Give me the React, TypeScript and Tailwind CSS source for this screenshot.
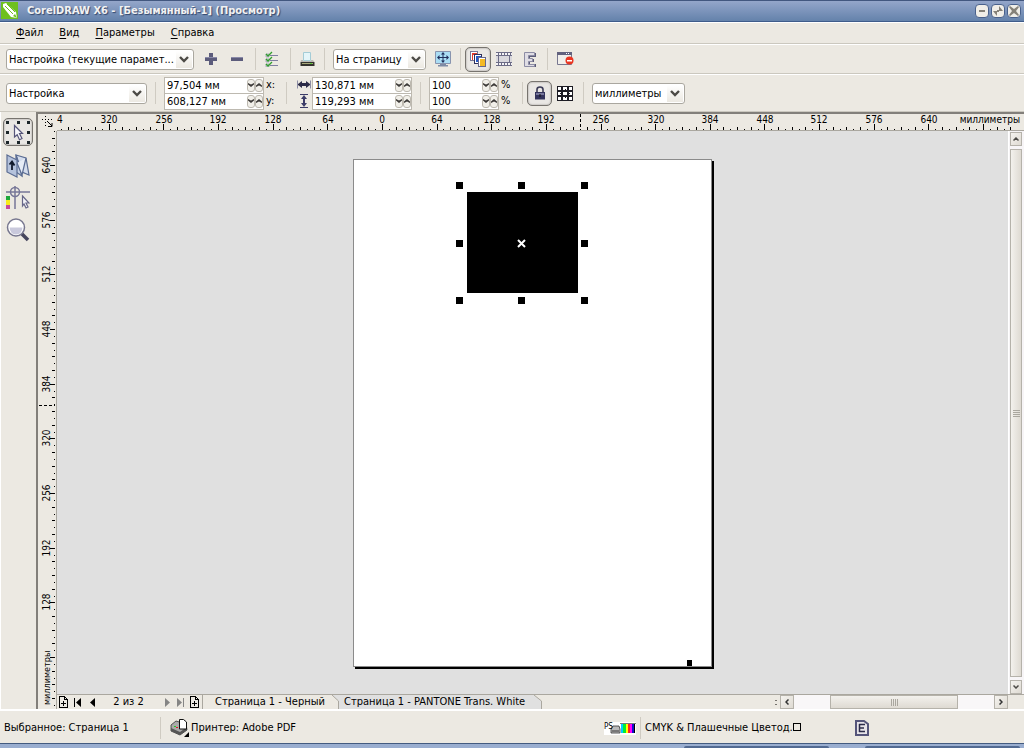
import type { ReactNode } from 'react';

const PITCH = 54.65;

const Sep = ({ className = '' }: { className?: string }) => (
  <span className={`w-px h-[22px] shrink-0 bg-[#cfcbc2] ${className}`} />
);

const Chevron = () => (
  <svg className="w-[10px] h-[7px]" viewBox="0 0 10 7" fill="none" stroke="#4c4a46" strokeWidth="2.4">
    <path d="M1 1l4 4 4-4" />
  </svg>
);

const Dropdown = ({ label, value, className }: { label: string; value: string; className: string }) => (
  <span className={`grid shrink-0 h-[21px] rounded-[3px] border border-[#aaa79f] bg-white ${className}`}>
    <select aria-label={label} className="[grid-area:1/1] appearance-none w-full h-[19px] pl-[2px] pr-4 bg-transparent text-[11px] leading-[19px] truncate outline-none">
      <option>{value}</option>
    </select>
    <span className="[grid-area:1/1] justify-self-end flex items-center justify-center w-4 h-[17px] m-px bg-linear-to-b from-white to-[#ece9e2] pointer-events-none">
      <Chevron />
    </span>
  </span>
);

const SPIN_BTN = 'flex items-center justify-center w-[8px] h-[13px] rounded-[3px] border border-[#bdb9b0] bg-[#f1efe9]';

const Spin = ({ label, value, className }: { label: string; value: string; className: string }) => (
  <span className={`flex items-center h-[17px] border border-[#bdb9b0] bg-white ${className}`}>
    <input aria-label={label} defaultValue={value} className="flex-1 min-w-0 h-[15px] pl-[2px] text-[11px] leading-[15px] outline-none" />
    <button aria-label={`${label} -`} className={SPIN_BTN}>
      <svg className="w-[6px] h-[4px] shrink-0" viewBox="0 0 6 4"><path d="M0 0l3 1.500L6 0v1.500L3 4 0 1.500z" fill="#3c3a38" /></svg>
    </button>
    <button aria-label={`${label} +`} className={SPIN_BTN}>
      <svg className="w-[6px] h-[4px] shrink-0" viewBox="0 0 6 4"><path d="M0 4l3-1.500L6 4V2.500L3 0 0 2.500z" fill="#3c3a38" /></svg>
    </button>
  </span>
);

const IconButton = ({ label, className, children }: { label: string; className: string; children: ReactNode }) => (
  <button aria-label={label} className={`flex items-center justify-center shrink-0 ${className}`}>
    {children}
  </button>
);

const PRESSED = 'rounded-[5px] border border-[#77746f] bg-[#e9e7e4] shadow-[inset_0_0_2px_#8d8a86]';

const TitleBar = () => (
  <header className="flex items-center h-[22px] shrink-0 pr-[3px] pb-px border-t border-b border-t-[#42577f] border-b-[#3f5c8a] bg-linear-to-b from-[#94a6ca] to-[#6482ab]">
    <svg className="w-[17px] h-[17px] ml-px" viewBox="0 0 17 17">
      <path d="M0 0h17v17H0z" fill="#6ec01e" />
      <path d="M2 2l3-1 10 9 1 6-6-1L2 5z" fill="#fff" />
      <path d="M4 4l8 8M6 2l8 8" stroke="#6ec01e" strokeWidth="1" />
      <path d="M12 14l2-2 2 4z" fill="#6ec01e" />
    </svg>
    <h1 className="ml-[9px] text-[11px] leading-4 font-bold text-[#f2f2f2] [text-shadow:1px_1px_1px_#33476c] whitespace-nowrap">
      CorelDRAW X6 - [Безымянный-1] (Просмотр)
    </h1>
    <div className="flex gap-[2px] ml-auto">
      {[
        ['Свернуть', 'M4 6h6v2H4z'],
        ['Восстановить', 'M8 2l4 5H8zM6 12L2 7h4zM6 6h2v2H6z'],
        ['Закрыть', 'M3 2l4 3 4-3 1 1-3 4 3 4-1 1-4-3-4 3-1-1 3-4-3-4z'],
      ].map(([name, d]) => (
        <button key={name} aria-label={name} className="flex items-center justify-center w-[14px] h-[14px] rounded-[4px] border border-[#49618c] bg-[#f0eee8]">
          <svg className="w-[14px] h-[14px] shrink-0" viewBox="0 0 14 14"><path d={d} fill="#858178" /></svg>
        </button>
      ))}
    </div>
  </header>
);

const MenuBar = () => (
  <nav className="flex items-center gap-4 h-[22px] shrink-0 pl-4 border-t border-t-white border-b border-b-[#cbc8bf]">
    {['Файл', 'Вид', 'Параметры', 'Справка'].map((item) => (
      <a key={item} href="#" className="leading-4">
        <span className="underline underline-offset-2">{item[0]}</span>{item.slice(1)}
      </a>
    ))}
  </nav>
);

const StandardBar = () => (
  <div className="flex items-center h-[30px] shrink-0 pl-[6px] border-t border-t-white border-b border-b-[#cbc8bf]">
    <Dropdown label="Стиль просмотра" value="Настройка (текущие парамет..." className="w-[188px]" />
    <IconButton label="Добавить" className="ml-[10px] w-[14px] h-[14px]">
      <svg className="w-[14px] h-[14px]" viewBox="0 0 14 14"><path d="M5 1h4v4h4v4H9v4H5V9H1V5h4z" fill="#5c5c7c" /><path d="M1 5h12v1H1z" fill="#8a8aa8" /></svg>
    </IconButton>
    <IconButton label="Удалить" className="ml-3 w-[14px] h-[14px]">
      <svg className="w-[14px] h-[14px]" viewBox="0 0 14 14"><path d="M1 5h12v4H1z" fill="#5c5c7c" /><path d="M1 5h12v1H1z" fill="#8a8aa8" /></svg>
    </IconButton>
    <Sep className="ml-[11px]" />
    <IconButton label="Параметры" className="ml-[9px] w-[14px] h-[16px]">
      <svg className="w-[14px] h-[16px]" viewBox="0 0 14 16" fill="none">
        <path d="M5 4.500h8M5 9.500h8M5 14.500h8" stroke="#8080a0" />
        <path d="M1 3h3v3H1zM1 8h3v3H1zM1 13h3v3H1z" fill="#d8d6e0" stroke="#8c8caa" strokeWidth=".6" />
        <path d="M1 3l2 2 4-4M1 8l2 2 4-4M1 13l2 2 4-4" stroke="#32a02c" strokeWidth="1.300" />
      </svg>
    </IconButton>
    <Sep className="ml-[11px]" />
    <IconButton label="Печать" className="ml-[9px] w-[15px] h-[15px]">
      <svg className="w-[15px] h-[15px]" viewBox="0 0 15 15">
        <path d="M3.500.5h7v8h-7z" fill="#e4f5f9" stroke="#a4ccd6" />
        <path d="M1 8h2v1h8V8h2l1.500 2H.5z" fill="#bcbab4" />
        <path d="M.5 10h14v4H.5z" fill="#34342e" /><path d="M2 11h11v1H2z" fill="#a7a87a" /><path d="M10 11h2v1h-2z" fill="#5cd03c" />
      </svg>
    </IconButton>
    <Sep className="ml-[9px]" />
    <Dropdown label="Масштаб" value="На страницу" className="ml-2 w-[93px]" />
    <IconButton label="Во весь экран" className="ml-[9px] w-4 h-4">
      <svg className="w-4 h-4" viewBox="0 0 16 16">
        <path d="M.5.5h15v12H.5z" fill="#aaddf4" stroke="#8894ae" />
        <path d="M5 13h6v1h2v1.500H3V14h2z" fill="#7d8aa4" />
        <path d="M3 6.500h10M8 2v9" stroke="#20305c" />
        <path d="M2 6.500L4.500 4v5zM14 6.500L11.500 4v5zM8 1L6 3.500h4zM8 12L6 9.500h4z" fill="#20305c" />
      </svg>
    </IconButton>
    <Sep className="ml-[9px]" />
    <IconButton label="Композит" className={`ml-[4px] w-[26px] h-[25px] ${PRESSED}`}>
      <svg className="w-[18px] h-[18px] shrink-0" viewBox="0 0 18 18" fill="#fff" shapeRendering="crispEdges">
        <path d="M1.500 1.500h7v9h-7z" stroke="#777798" /><path d="M3 3h5v2H4v5H3z" fill="#e23a2c" />
        <path d="M5.500 4.500h7v9h-7z" stroke="#30305c" /><path d="M7 6h5v2H9v4H7z" fill="#2458c8" />
        <path d="M9.500 7.500h7v9h-7z" stroke="#67678a" /><path d="M11 9h5v7h-5z" fill="#f4b924" />
      </svg>
    </IconButton>
    <IconButton label="Цветоделение" className="ml-[5px] w-4 h-4">
      <svg className="w-4 h-4" viewBox="0 0 16 16" shapeRendering="crispEdges">
        <path d="M0 1h16v4H0zM0 11h16v4H0z" fill="#6c6c86" />
        <path d="M3 5h10v6H3z" fill="#d9d8dd" /><path d="M2 4h1v8H2zM13 4h1v8h-1z" fill="#6c6c86" />
        <path d="M0 5h2v6H0zM14 5h2v6h-2z" fill="#d9d8dd" />
        <path d="M0 3h16M0 13h16" stroke="#f4f3f6" strokeWidth="2" strokeDasharray="2 1" />
      </svg>
    </IconButton>
    <IconButton label="Эмуляция" className="ml-[11px] w-[14px] h-[17px]">
      <svg className="w-[14px] h-[17px]" viewBox="0 0 14 17">
        <path d="M2 2h11v4H7v2h4v3H7v2h6v3H2z" fill="#5c5c78" />
        <path d="M1.500 1.500h10v3h-6v3h4v3h-4v3h6v2h-10z" fill="#dfdde4" stroke="#8c8ca4" />
      </svg>
    </IconButton>
    <Sep className="ml-[10px]" />
    <IconButton label="Закрыть просмотр" className="ml-[9px] w-[17px] h-4">
      <svg className="w-[17px] h-4" viewBox="0 0 17 16">
        <path d="M.5 1.500h14v12H.5z" fill="#f1efeb" stroke="#777790" /><path d="M0 1h15v3H0z" fill="#62627e" /><path d="M9 2h1v1H9zM11 2h1v1h-1z" fill="#fff" />
        <circle cx="12.500" cy="9.500" r="4" fill="#e93622" /><path d="M10 9h5v1.500h-5z" fill="#fff" />
      </svg>
    </IconButton>
  </div>
);

const PropertyBar = () => (
  <div className="flex items-center h-[37px] shrink-0 pl-[6px] border-t border-t-white">
    <Dropdown label="Расположение" value="Настройка" className="w-[141px]" />
    <Sep className="ml-2" />
    <div className="flex flex-col -space-y-px ml-2">
      <Spin label="x" value="97,504 мм" className="w-[100px]" />
      <Spin label="y" value="608,127 мм" className="w-[100px]" />
    </div>
    <div className="flex flex-col ml-[2px] w-3 leading-4">
      <span>x:</span>
      <span>y:</span>
    </div>
    <Sep className="ml-2" />
    <div className="flex flex-col items-center gap-[2px] ml-[10px] w-[14px]">
      <svg className="w-[14px] h-[14px]" viewBox="0 0 14 14"><path d="M.5 2.500v8M13.500 2.500v8" stroke="#8c8ca4" fill="none" /><path d="M1 6l4-3v2h4V3l4 3v1l-4 3V8H5v2L1 7z" fill="#2c2c48" /></svg>
      <svg className="w-[14px] h-[14px]" viewBox="0 0 14 14"><path d="M3 .5h8M3 13.500h8" stroke="#3c3c68" fill="none" /><path d="M7 1l3 4H8v4h2l-3 4-3-4h2V5H4z" fill="#3c3c68" /></svg>
    </div>
    <div className="flex flex-col -space-y-px ml-px">
      <Spin label="Ширина" value="130,871 мм" className="w-[100px]" />
      <Spin label="Высота" value="119,293 мм" className="w-[100px]" />
    </div>
    <Sep className="ml-2" />
    <div className="flex flex-col -space-y-px ml-2">
      <Spin label="Масштаб по ширине" value="100" className="w-[70px]" />
      <Spin label="Масштаб по высоте" value="100" className="w-[70px]" />
    </div>
    <div className="flex flex-col ml-[2px] w-3 leading-4">
      <span>%</span>
      <span>%</span>
    </div>
    <Sep className="ml-[9px]" />
    <IconButton label="Сохранять пропорции" className={`ml-[4px] w-[25px] h-[25px] ${PRESSED}`}>
      <svg className="w-[12px] h-[14px]" viewBox="0 0 12 14"><path d="M3 7V3.500Q3 1 6 1t3 2.500V7" fill="none" stroke="#3c3c58" strokeWidth="1.600" /><path d="M1 6h10v7.500H1z" fill="#33335c" /><path d="M2 7h8v2H2z" fill="#77779c" /><path d="M5.500 8h1v3h-1z" fill="#111" /></svg>
    </IconButton>
    <IconButton label="Мозаика" className="ml-[5px] w-[17px] h-[17px]">
      <svg className="w-[17px] h-[17px]" viewBox="0 0 17 17" fill="#fff" stroke="#1c1c24" shapeRendering="crispEdges">
        <path d="M.5 1.500h4v4h-4zM5.500 1.500h5v4h-5zM11.500 1.500h4v4h-4zM.5 6.500h4v4h-4zM11.500 6.500h4v4h-4zM.5 11.500h4v4h-4zM5.500 11.500h5v4h-5zM11.500 11.500h4v4h-4z" />
        <path d="M5.500 6.500h5v4h-5z" />
        <path d="M3 8.500h3M10 8.500h3M8 4v3M8 10v3" />
      </svg>
    </IconButton>
    <Sep className="ml-[9px]" />
    <Dropdown label="Единицы" value="миллиметры" className="ml-2 w-[93px]" />
  </div>
);

const ToolBox = () => (
  <aside className="flex flex-col items-center gap-2 w-9 shrink-0 pt-[6px] pr-[2px] border-l border-l-white">
    <IconButton label="Указатель" className={`w-[30px] h-[28px] ${PRESSED}`}>
      <svg className="w-[26px] h-[26px] shrink-0" viewBox="0 0 26 26">
        <path d="M1 2h3v3H1zM12 2h3v3h-3zM22 2h3v3h-3zM1 12h3v3H1zM22 12h3v3h-3zM1 22h3v3H1zM12 22h3v3h-3zM22 22h3v3h-3z" fill="#1d272b" />
        <path d="M9.500 6.500l8 8h-3l2.500 5-2.500 1.200-2.300-5-2.700 2.300z" fill="#f7f7fb" stroke="#55557a" strokeWidth="1.200" />
      </svg>
    </IconButton>
    <IconButton label="Спуск полос" className="w-6 h-6">
      <svg className="w-6 h-6" viewBox="0 0 24 24" stroke="#5a6c92" strokeWidth="1.200">
        <path d="M10 1l10 3 3 17-7-3z" fill="#d3dcec" />
        <path d="M10 1v17l6 4z" fill="#c4d0e4" />
        <path d="M20 4l-4 17-5-12" fill="#e6ecf6" />
        <path d="M1 1l10 5v17L1 18z" fill="#b4c2dc" />
        <path d="M6 16V8M3.500 10.500L6 7.500l2.500 4" fill="none" stroke="#111a2c" strokeWidth="1.800" />
      </svg>
    </IconButton>
    <IconButton label="Метки печати" className="w-6 h-6">
      <svg className="w-6 h-6" viewBox="0 0 24 24" fill="none" stroke="#777798" strokeWidth="1.500">
        <path d="M0 6h24M9 0v23" /><circle cx="9" cy="6" r="4.500" />
        <path d="M0 10h4v4H0z" fill="#1fa83a" stroke="none" /><path d="M0 14h4v5H0z" fill="#f6ec18" stroke="none" /><path d="M0 19h4v4H0z" fill="#c8489c" stroke="none" />
        <path d="M16.500 10l6.500 7h-3l2 4-2 1-2-4-1.500 2z" fill="#f3f3f8" stroke="#666688" strokeWidth="1.200" />
      </svg>
    </IconButton>
    <IconButton label="Масштаб" className="w-6 h-6">
      <svg className="w-6 h-6" viewBox="0 0 24 24">
        <path d="M15 15l7 7" stroke="#45455c" strokeWidth="3.500" />
        <circle cx="10" cy="9.500" r="8.500" fill="#fff" stroke="#77778f" strokeWidth="1.500" />
        <path d="M3.500 9.500h13Q16 16 10 16.500 4 16 3.500 9.500z" fill="#c9c9dc" />
      </svg>
    </IconButton>
  </aside>
);

const H_LABELS = ['320', '256', '192', '128', '64', '0', '64', '128', '192', '256', '320', '384', '448', '512', '576', '640'];
const V_LABELS = ['640', '576', '512', '448', '384', '320', '256', '192', '128'];

const tickLength = (n: number, major: number) => {
  if (n % 8 === 0) return major;
  return n % 2 === 0 ? 3 : 1;
};

const HorizontalRuler = () => (
  <div className="flex flex-1 min-w-0 h-[17px] border-b border-b-[#aaa79f]">
    <svg className="flex-1 min-w-0 h-[17px]" shapeRendering="crispEdges" fontSize="10">
      {Array.from({ length: 141 }, (_, n) => {
        const len = tickLength(n, 6);
        return <rect key={n} x={Math.round(-3 + (n * PITCH) / 8)} y={16 - len} width="1" height={len} />;
      })}
      <text x="0" y="9">4</text>
      {H_LABELS.map((label, i) => (
        <text key={i} x={Math.round(52 + i * PITCH)} y="9" textAnchor="middle">{label}</text>
      ))}
      <path d="M523.500 0v16" stroke="#000" strokeDasharray="3 2" />
    </svg>
    <span className="-ml-[66px] w-[66px] pr-1 text-[10px] leading-[12px] text-right">миллиметры</span>
  </div>
);

const VerticalRuler = () => (
  <svg className="w-[19px] h-full shrink-0 border-r border-r-[#aaa79f]" shapeRendering="crispEdges" fontSize="10">
    {Array.from({ length: 85 }, (_, n) => {
      const len = tickLength(n + 3, 5);
      return <rect key={n} x={17 - len} y={Math.round((n * PITCH) / 8)} width={len} height="1" />;
    })}
    {V_LABELS.map((label, i) => (
      <text key={i} transform={`translate(12 ${Math.round(34 + i * PITCH)}) rotate(-90)`} textAnchor="middle">{label}</text>
    ))}
    <text transform="translate(12 574) rotate(-90)" fontSize="9">миллиметры</text>
    <path d="M1 274.500h16" stroke="#000" strokeDasharray="3 2" />
  </svg>
);

const Canvas = () => (
  <main className="relative flex-1 min-w-0 overflow-hidden bg-[#e0e0e0]">
    <div className="absolute left-[296px] top-[28px] w-[359px] h-[508px] border border-[#8b8b8b] bg-white shadow-[2px_2px_0_#000]">
      <svg className="w-full h-full" shapeRendering="crispEdges">
        <path d="M113 32h111v101H113z" />
        <path d="M102 22h7v7h-7zM164 22h7v7h-7zM227 22h7v7h-7zM102 80h7v7h-7zM227 80h7v7h-7zM102 137h7v7h-7zM164 137h7v7h-7zM227 137h7v7h-7z" />
        <path d="M164 80l7 7M171 80l-7 7" stroke="#fff" strokeWidth="2" shapeRendering="auto" />
        <path d="M333 500h5v6h-5z" />
      </svg>
    </div>
  </main>
);

const SCROLL_BTN = 'flex items-center justify-center shrink-0 border border-[#b5b2aa] bg-linear-to-br from-[#f5f3ef] to-[#dedad2]';

const VerticalScroll = () => (
  <div className="flex flex-col w-[16px] shrink-0 pl-px pr-[2px] pt-px border-l border-l-white bg-[#f7f5f7]">
    <button aria-label="Вверх" className={`h-[14px] ${SCROLL_BTN}`}>
      <svg className="w-[6px] h-[4px]" viewBox="0 0 6 4" fill="none" stroke="#4c4a46" strokeWidth="1.500"><path d="M.5 3.500L3 1l2.500 2.500" /></svg>
    </button>
    <div className="flex flex-col items-center justify-center gap-px flex-1 my-[3px] border border-[#b5b2aa] bg-linear-to-r from-[#f3f1ed] to-[#dedad2]">
      {[0, 1, 2, 3].map((n) => <span key={n} className="w-[7px] h-px bg-[#aaa79f]" />)}
    </div>
    <button aria-label="Вниз" className={`h-[14px] ${SCROLL_BTN}`}>
      <svg className="w-[6px] h-[4px]" viewBox="0 0 6 4" fill="none" stroke="#4c4a46" strokeWidth="1.500"><path d="M.5.5L3 3 5.500.5" /></svg>
    </button>
  </div>
);

const AddPage = () => (
  <svg className="w-[10px] h-[12px]" viewBox="0 0 10 12" fill="none" stroke="#000" shapeRendering="crispEdges">
    <path d="M.5.5h5l3 3v8h-8zM5.500.5v3h3M2 7.500h5M4.500 5v5" />
  </svg>
);

const PageBar = () => (
  <div className="flex items-stretch h-[15px] shrink-0 border-t border-t-[#aaa79f]">
    <IconButton label="Добавить страницу" className="ml-[2px] w-[10px]"><AddPage /></IconButton>
    <IconButton label="Первая" className="ml-[5px] w-[8px]"><svg className="w-[8px] h-[10px]" viewBox="0 0 8 10"><path d="M0 1h1v9H0zM7 1v9L2 5.500z" /></svg></IconButton>
    <IconButton label="Предыдущая" className="ml-2 w-[6px]"><svg className="w-[6px] h-[10px]" viewBox="0 0 6 10"><path d="M5 1v9L0 5.500z" /></svg></IconButton>
    <span className="w-[69px] pr-[4px] text-center leading-[14px]">2 из 2</span>
    <IconButton label="Следующая" className="w-[6px]"><svg className="w-[6px] h-[10px]" viewBox="0 0 6 10" fill="#858585"><path d="M0 1v9l5-4.500z" /></svg></IconButton>
    <IconButton label="Последняя" className="ml-[6px] w-[7px]"><svg className="w-[7px] h-[10px]" viewBox="0 0 7 10" fill="#858585"><path d="M0 1v9l5-4.500zM6 1h1v9H6z" /></svg></IconButton>
    <IconButton label="Добавить страницу после" className="ml-[6px] w-[10px]"><AddPage /></IconButton>
    <span className="ml-[2px] w-px bg-[#aaa79f]" />
    <button className="w-[129px] pl-[12px] text-left leading-[14px] whitespace-nowrap">Страница 1 - Черный</button>
    <svg className="w-[7px] h-[14px] bg-[#e0e0e0]" viewBox="0 0 7 14"><path d="M0 0l6.500 6v8H0z" fill="#ece9e2" /><path d="M0 0l6.500 6v8" fill="none" stroke="#aaa79f" /></svg>
    <button className="w-[195px] pl-[5px] text-left leading-[14px] whitespace-nowrap bg-[#e0e0e0]">Страница 1 - PANTONE Trans. White</button>
    <svg className="w-[8px] h-[14px]" viewBox="0 0 8 14"><path d="M0 0l7.500 6v8H0z" fill="#e0e0e0" /><path d="M0 0l7.500 6v8" fill="none" stroke="#aaa79f" /></svg>
    <div className="flex ml-auto w-[233px] mr-4">
      <span className="flex flex-col justify-center gap-[3px] w-[5px]"><i className="w-[2px] h-px bg-[#77746f]" /><i className="w-[2px] h-px bg-[#77746f]" /></span>
      <button aria-label="Влево" className={`w-[14px] ${SCROLL_BTN}`}>
        <svg className="w-[4px] h-[6px]" viewBox="0 0 4 6" fill="none" stroke="#333" strokeWidth="1.500"><path d="M3.500.5L1 3l2.500 2.500" /></svg>
      </button>
      <span className="w-9 bg-[#f9f7f8]" />
      <span className="flex items-center justify-center gap-px w-[128px] border border-[#b5b2aa] bg-linear-to-b from-[#f3f1ed] to-[#dedad2]">
        {[0, 1, 2, 3].map((n) => <span key={n} className="w-px h-[7px] bg-[#aaa79f]" />)}
      </span>
      <span className="flex-1 bg-[#f9f7f8]" />
      <button aria-label="Вправо" className={`w-[14px] ${SCROLL_BTN}`}>
        <svg className="w-[4px] h-[6px]" viewBox="0 0 4 6" fill="none" stroke="#333" strokeWidth="1.500"><path d="M.5.5L3 3 .5 5.500" /></svg>
      </button>
    </div>
  </div>
);

const StatusBar = () => (
  <footer className="flex items-center h-[34px] shrink-0 pl-1 pt-[2px] border-t-2 border-t-white">
    <span className="w-[156px]">Выбранное: Страница 1</span>
    <Sep />
    <svg className="w-[19px] h-[18px] ml-[9px]" viewBox="0 0 19 18">
      <path d="M1 6l5-4 10 3 1 6-7 5-9-4z" fill="#aaa" stroke="#333" strokeWidth=".8" /><path d="M1 9l9 4 7-5v3l-7 5-9-4z" fill="#555" />
      <path d="M9.500.5h4l3 2.500v7h-7z" fill="#fff" stroke="#111" /><path d="M4 7h2v1H4z" fill="#2c2" /><path d="M6 8h2v1H6z" fill="#d22" />
      <path d="M19 13v5h-5z" />
    </svg>
    <span className="ml-[2px] w-[413px]">Принтер: Adobe PDF</span>
    <svg className="w-[32px] h-[13px]" viewBox="0 0 32 13">
      <path d="M0 0h32v13H0z" fill="#fff" />
      <path d="M7 7l2-3h6l1 3v4H7z" fill="#bbb" stroke="#333" strokeWidth=".8" /><path d="M8 9h7" stroke="#333" />
      <text x="0" y="7" fontSize="8">PS</text>
      <path d="M16 1h16v1H16z" fill="#777" />
      <path d="M17 2h2v9h-2z" fill="#0cf" /><path d="M19 2h3v9h-3z" fill="#0e3" /><path d="M22 2h2v9h-2z" fill="#ff0" /><path d="M24 2h2v9h-2z" fill="#f22" /><path d="M26 2h2v9h-2z" fill="#f0f" /><path d="M28 2h2v9h-2z" fill="#11c" /><path d="M30 2h1v9h-1z" />
    </svg>
    <Sep className="ml-1" />
    <span className="ml-1 w-[210px] whitespace-nowrap">CMYK &amp; Плашечные Цветод.<i className="inline-block w-[8px] h-[8px] border border-black" /></span>
    <svg className="w-[14px] h-4" viewBox="0 0 14 16"><path d="M1 1h8l4 3v11H1z" fill="#e6e3e8" stroke="#55557a" strokeWidth="2" /><path d="M4.500 4v8M4 4.500h6M4 8h5M4 11.500h6" stroke="#2b2b48" strokeWidth="1.500" /></svg>
  </footer>
);

const TaskBarEdge = () => (
  <div className="flex justify-end gap-9 h-[5px] shrink-0 pr-1 border-t border-t-[#435b80] bg-[#9aaed0]">
    <span className="w-[145px] mt-[2px] rounded-t-sm bg-[#526a92]" />
    <span className="w-[155px] mt-[2px] rounded-t-sm bg-[#526a92]" />
  </div>
);

export default function App() {
  return (
    <div className="flex flex-col min-h-screen bg-[#ece9e2] text-black text-[11px] leading-[14px] font-['DejaVu_Sans_Condensed','Noto_Sans',sans-serif]">
      <TitleBar />
      <MenuBar />
      <StandardBar />
      <PropertyBar />
      <div className="flex flex-1 border-t border-t-[#cbc8bf]">
        <ToolBox />
        <div className="flex flex-col flex-1 min-w-0 border-l-2 border-t-2 border-[#827f7a]">
          <div className="flex">
            <svg className="w-[19px] h-[17px] shrink-0" viewBox="0 0 19 17" fill="none" stroke="#000">
              <path d="M7.500 2v12M4 5.500h12" strokeDasharray="1 2" /><path d="M9 7l5 5M14 9v3.500h-4" />
            </svg>
            <HorizontalRuler />
          </div>
          <div className="flex flex-1">
            <VerticalRuler />
            <div className="flex flex-col flex-1 min-w-0">
              <div className="flex flex-1">
                <Canvas />
                <VerticalScroll />
              </div>
              <PageBar />
            </div>
          </div>
        </div>
      </div>
      <StatusBar />
      <TaskBarEdge />
    </div>
  );
}
